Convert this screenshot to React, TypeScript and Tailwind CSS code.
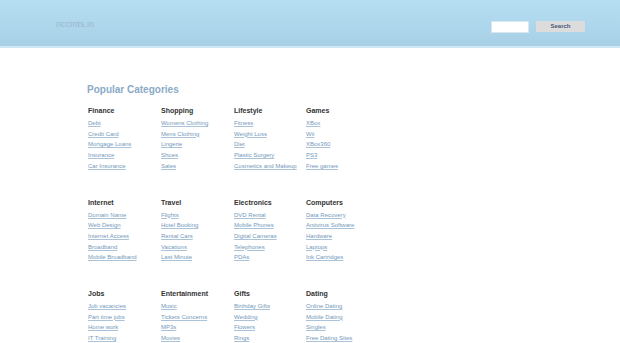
const sections: { title: string; links: string[] }[][] = [
  [
    { title: 'Finance', links: ['Debt', 'Credit Card', 'Mortgage Loans', 'Insurance', 'Car Insurance'] },
    { title: 'Shopping', links: ['Womens Clothing', 'Mens Clothing', 'Lingerie', 'Shoes', 'Sales'] },
    { title: 'Lifestyle', links: ['Fitness', 'Weight Loss', 'Diet', 'Plastic Surgery', 'Cosmetics and Makeup'] },
    { title: 'Games', links: ['XBox', 'Wii', 'XBox360', 'PS3', 'Free games'] },
  ],
  [
    { title: 'Internet', links: ['Domain Name', 'Web Design', 'Internet Access', 'Broadband', 'Mobile Broadband'] },
    { title: 'Travel', links: ['Flights', 'Hotel Booking', 'Rental Cars', 'Vacations', 'Last Minute'] },
    { title: 'Electronics', links: ['DVD Rental', 'Mobile Phones', 'Digital Cameras', 'Telephones', 'PDAs'] },
    { title: 'Computers', links: ['Data Recovery', 'Antivirus Software', 'Hardware', 'Laptops', 'Ink Cartridges'] },
  ],
  [
    { title: 'Jobs', links: ['Job vacancies', 'Part time jobs', 'Home work', 'IT Training'] },
    { title: 'Entertainment', links: ['Music', 'Tickets Concerns', 'MP3s', 'Movies'] },
    { title: 'Gifts', links: ['Birthday Gifts', 'Wedding', 'Flowers', 'Rings'] },
    { title: 'Dating', links: ['Online Dating', 'Mobile Dating', 'Singles', 'Free Dating Sites'] },
  ],
];

export default function App() {
  return (
    <div className="min-h-[343px] bg-white font-['Liberation_Sans',Arial,sans-serif]">
      <div className="h-[48px] bg-gradient-to-b from-[#b6def3] to-[#a7d0e6] border-b-2 border-[#cde7f5] flex items-center pl-[56px] pr-[35px]">
        <span className="text-[9px] text-[#9ab8cf] mt-[3px]">nccmts.in</span>
        <div className="ml-auto flex items-center gap-[7px] mt-[7px]">
          <input className="w-[38px] h-[12px] bg-white border border-[#d8e8f0] outline-none" />
          <button className="w-[49px] h-[11px] bg-[#dcdcdc] text-[6px] font-bold text-[#4a5a78] leading-[11px]">Search</button>
        </div>
      </div>

      <main className="pl-[87px] pt-[36px]">
        <h1 className="text-[10px] leading-[12px] font-bold text-[#8aaac6]">Popular Categories</h1>
        <div className="flex flex-col gap-[25px] mt-[9px]">
          {sections.map((row, i) => (
            <div key={i} className="grid grid-cols-[73px_73px_72px_73px]">
              {row.map(cat => (
                <div key={cat.title} className="flex flex-col">
                  <div className="text-[7px] leading-[12px] font-bold text-[#333] pl-[1px]">{cat.title}</div>
                  <div className="flex flex-col pt-[1px]">
                    {cat.links.map(l => (
                      <a key={l} href="#" className="text-[6px] leading-[10.7px] text-[#7399bb] underline decoration-[#aac3d8] pl-[1px] whitespace-nowrap">
                        {l}
                      </a>
                    ))}
                  </div>
                </div>
              ))}
            </div>
          ))}
        </div>
      </main>
    </div>
  );
}
